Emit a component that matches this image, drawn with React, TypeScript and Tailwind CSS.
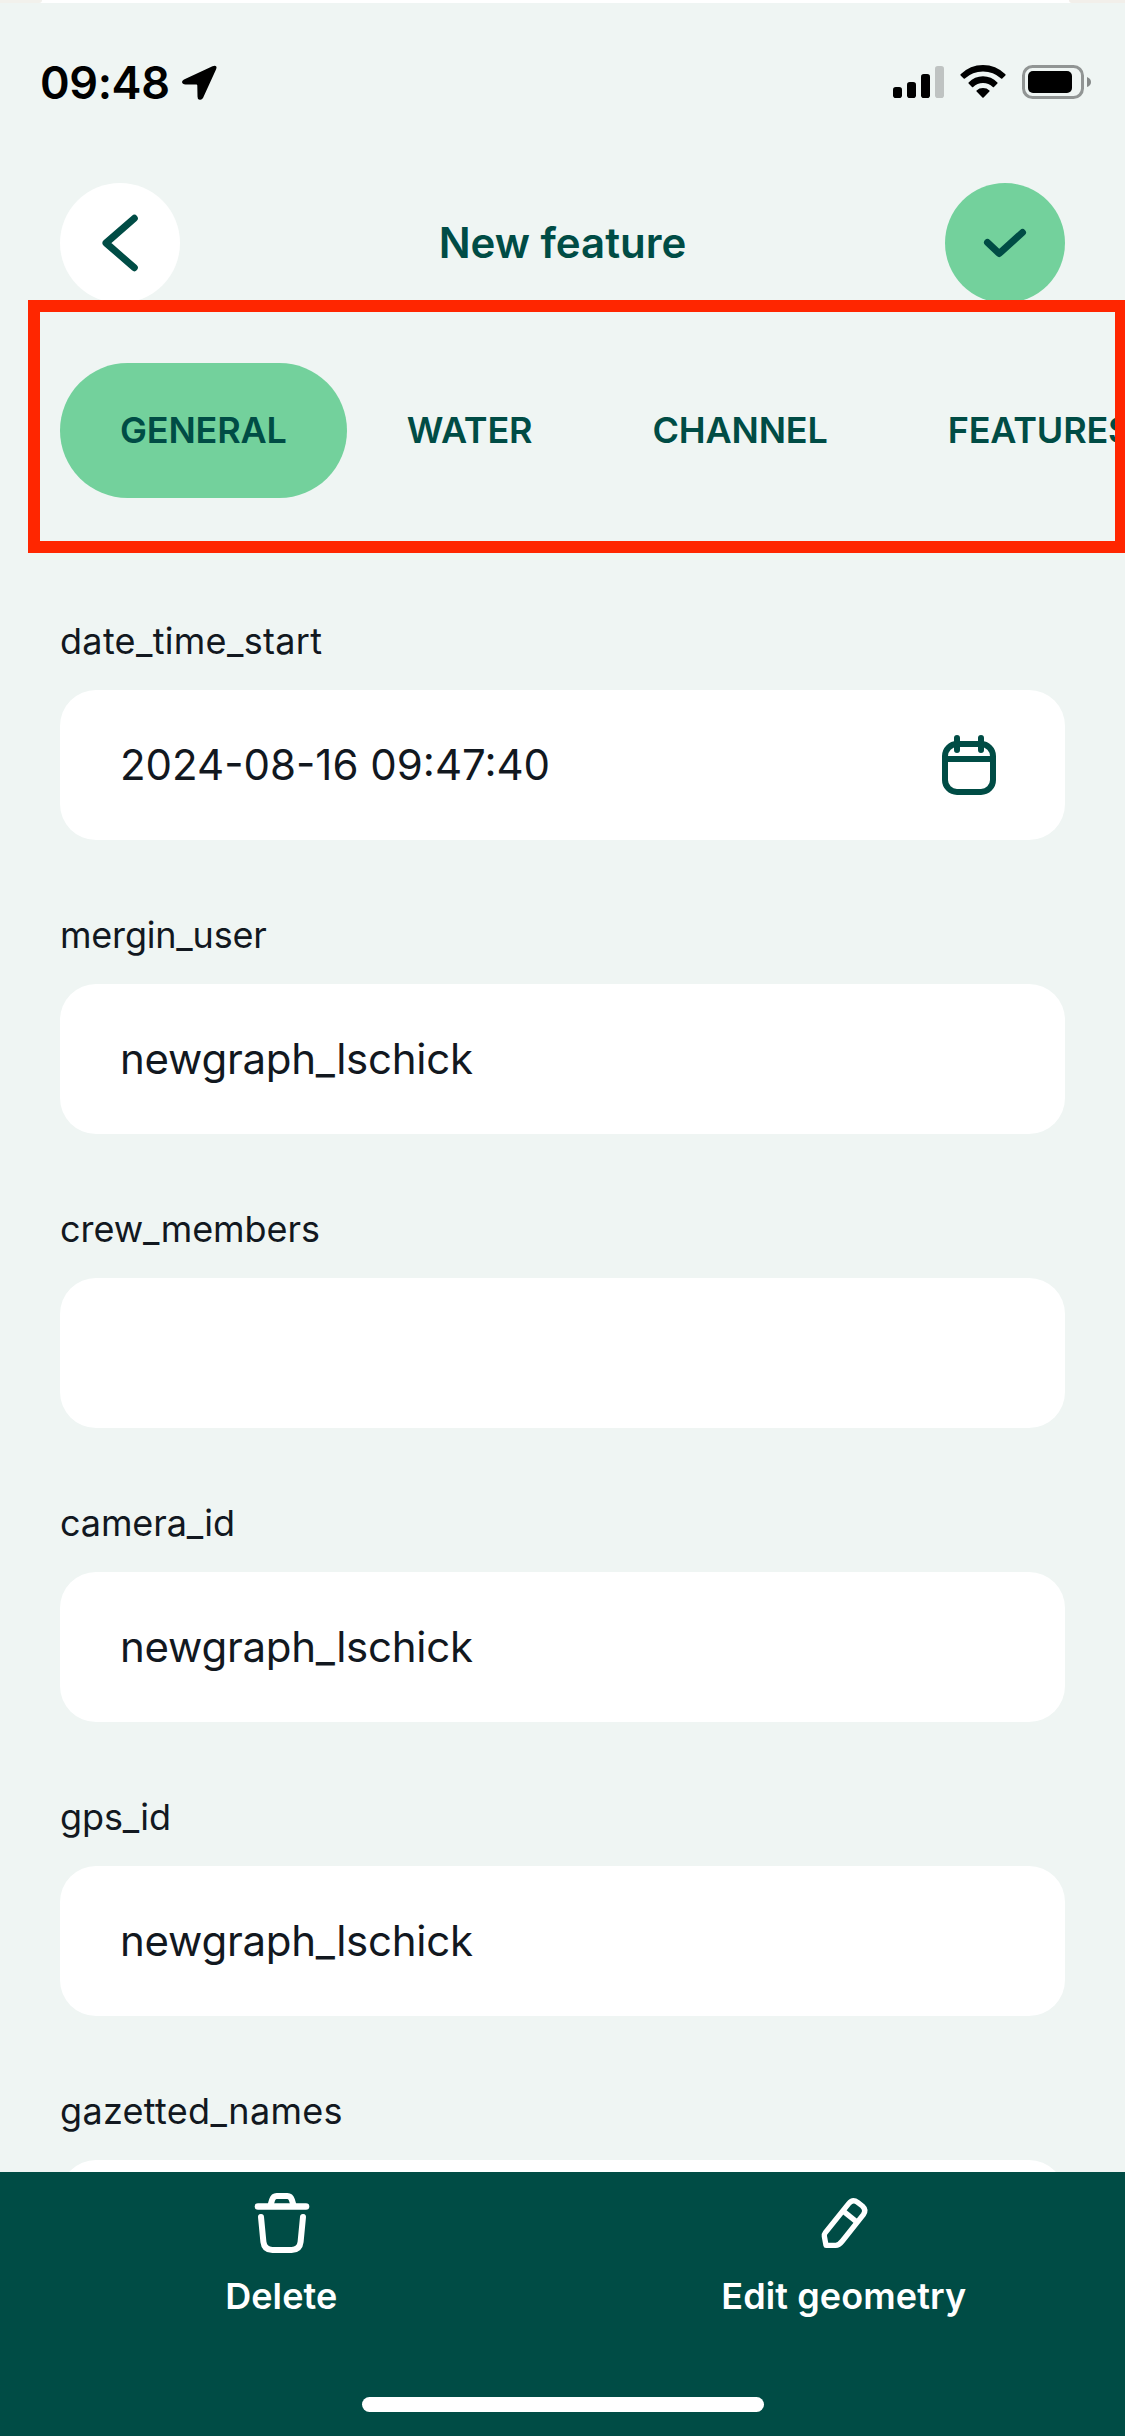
import type { ReactNode } from "react";

const tabs = ["GENERAL", "WATER", "CHANNEL", "FEATURES"];

const fields = [
  { label: "date_time_start", value: "2024-08-16 09:47:40", calendar: true, labelSpacing: "tracking-[0.31px]", valueSpacing: "" },
  { label: "mergin_user", value: "newgraph_lschick", labelSpacing: "tracking-[-0.2px]", valueSpacing: "tracking-[-0.25px]" },
  { label: "crew_members", value: "", labelSpacing: "tracking-[-0.05px]", valueSpacing: "" },
  { label: "camera_id", value: "newgraph_lschick", labelSpacing: "tracking-[-0.1px]", valueSpacing: "tracking-[-0.25px]" },
  { label: "gps_id", value: "newgraph_lschick", labelSpacing: "tracking-[-0.1px]", valueSpacing: "tracking-[-0.25px]" },
  { label: "gazetted_names", value: "", labelSpacing: "tracking-[0.3px]", valueSpacing: "" },
];

function CalendarIcon() {
  return (
    <svg className="size-[72px] text-[#004C45]" viewBox="0 0 24 24" fill="none" stroke="currentColor" strokeWidth="2" strokeLinecap="round">
      <rect x="4" y="5" width="16" height="16" rx="4" />
      <path d="M4 10h16M8 3v4M16 3v4" />
    </svg>
  );
}

function TrashIcon() {
  return (
    <svg className="ml-px size-[72px]" viewBox="0 0 24 24" fill="none" stroke="currentColor" strokeWidth="2" strokeLinecap="round" strokeLinejoin="round">
      <path d="M4 6.5h16" strokeWidth="2.2" />
      <path d="M8.1 6.3L8.7 4.3Q9.1 3 10.2 3h3.6q1.1 0 1.5 1.3l.6 2" />
      <path d="M5 10L5.8 18.3Q6.1 21 8.8 21H15.2Q17.9 21 18.2 18.3L19 10" />
    </svg>
  );
}

function PencilIcon() {
  return (
    <svg className="size-[72px]" viewBox="0 0 216 216" fill="none" stroke="currentColor" strokeWidth="16" strokeLinejoin="round">
      <path d="M54 175L49 148Q48 142 52 137L122 50Q134 35 149 46L163 57Q176 69 166 83L103 162Q93 175 83 175Z" />
      <path d="M104 71L144 103" />
    </svg>
  );
}

function StatusBar() {
  return (
    <div className="flex h-[158px] items-start justify-between pr-[34px] pl-[40px] text-black">
      <div className="flex pt-[50px]">
        <span className="w-[142px] text-[45px] leading-[60px] font-semibold tracking-[-0.4px]">09:48</span>
        <svg className="mt-[12px] h-[35px] w-[35px]" viewBox="0 0 35 35">
          <path d="M2 14.5L30.5 1.2Q36 -.5 34 4.5L21 33Q19.500 35.500 17 34.500Q15.500 34 15.500 31.500L15.300 20.500Q15.300 19.600 14.400 19.600L3.500 19.500Q.3 19.300 0 17Q0 15.500 2 14.500Z" />
        </svg>
      </div>
      <div className="flex items-start pt-[62px]">
        <svg className="h-[36px] w-[51px]" viewBox="0 0 51 36">
          <rect y="22" width="9" height="11" rx="2.800" />
          <rect x="14" y="17" width="9" height="16" rx="2.800" />
          <rect x="28" y="9" width="9" height="24" rx="2.800" />
          <rect x="42" y="1" width="9" height="32" rx="2.800" fill="#BFC3C2" />
        </svg>
        <svg className="ml-[16px] h-[34px] w-[46px]" viewBox="0 0 46 34">
          <path d="M.6 9.200Q10.200 0 23 0T45.400 9.200Q45.900 9.800 45.400 10.400L42.300 13.500Q41.700 14 41.100 13.500Q33.500 6.500 23 6.500T4.900 13.500Q4.300 14 3.700 13.500L.6 10.400Q.1 9.800 .6 9.200Z" />
          <path d="M8.600 17.400Q14.700 11.300 23 11.300T37.400 17.400Q37.900 18 37.400 18.600L34 22Q33.400 22.500 32.800 22Q28.800 18.100 23 18.100T13.200 22Q12.600 22.500 12 22L8.600 18.600Q8.100 18 8.600 17.400Z" />
          <path d="M16.600 25.400Q19.100 23 23 23T29.400 25.400Q30 26 29.400 26.600L23.600 32.400Q23 33 22.400 32.400L16.600 26.600Q16 26 16.600 25.400Z" />
        </svg>
        <svg className="ml-[16px] h-[34px] w-[69px]" viewBox="0 0 69 34">
          <rect x="1.500" y="1.500" width="59" height="31" rx="9" fill="none" stroke="#919594" strokeWidth="3" />
          <rect x="6" y="6" width="44" height="22" rx="5" />
          <path d="M65 12q4 1.500 4 5t-4 5z" fill="#868a89" />
        </svg>
      </div>
    </div>
  );
}

function Header() {
  return (
    <header className="mt-[22px] flex h-[120px] items-center justify-between px-[60px] text-[#004C45]">
      <button className="size-[120px] rounded-full bg-white">
        <svg viewBox="0 0 120 120" fill="none" stroke="currentColor" strokeWidth="7" strokeLinecap="round" strokeLinejoin="round">
          <path d="M74.300 35.300L46 60L74.300 84.700" />
        </svg>
      </button>
      <h1 className="pb-[2px] text-[42px] font-semibold">New feature</h1>
      <button className="size-[120px] rounded-full bg-[#73D19C]">
        <svg viewBox="0 0 120 120" fill="none" stroke="currentColor" strokeWidth="7" strokeLinecap="round" strokeLinejoin="round">
          <path d="M42.500 59.500L54.200 70.500L77.500 49.500" />
        </svg>
      </button>
    </header>
  );
}

function ToolButton({ icon, label }: { icon: ReactNode; label: string }) {
  return (
    <button className="flex flex-1 flex-col items-center gap-[15px] text-[36px] leading-[44px] font-semibold tracking-[0.1px]">
      {icon}
      {label}
    </button>
  );
}

export default function App() {
  return (
    <div className="relative flex h-[2436px] w-[1125px] flex-col overflow-hidden bg-[#EFF5F3] font-['Inter',sans-serif]">
      <div className="flex h-[3px] shrink-0 justify-between bg-white">
        <div className="h-full w-[42px] rounded-br-full bg-[#F2F1EC]" />
        <div className="h-full w-[56px] rounded-bl-full bg-[#F2EFEA]" />
      </div>
      <StatusBar />
      <Header />

      <nav className="mt-[60px] flex h-[135px] shrink-0 pl-[60px] text-[36px] font-semibold tracking-[-0.16px] text-[#004C45]">
        {tabs.map((tab, i) => (
          <button key={tab} className={i === 0 ? "shrink-0 rounded-full bg-[#73D19C] px-[60px] pb-[2px]" : "shrink-0 px-[60px] pb-[2px]"}>
            {tab}
          </button>
        ))}
      </nav>

      <main className="flex min-h-0 flex-1 flex-col gap-[68px] overflow-hidden px-[60px] pt-[116px] text-[#12181F]">
        {fields.map((field) => (
          <div key={field.label} className="flex shrink-0 flex-col gap-[22px]">
            <label className={`text-[36px] leading-[54px] ${field.labelSpacing}`}>{field.label}</label>
            <div className="flex h-[150px] items-center justify-between rounded-[36px] bg-white px-[60px] text-[42px]">
              <span className={`pb-[2px] ${field.valueSpacing}`}>{field.value}</span>
              {field.calendar && <CalendarIcon />}
            </div>
          </div>
        ))}
      </main>

      <footer className="flex h-[264px] shrink-0 flex-col items-center justify-between bg-[#004C45] pt-[15px] pb-[24px] text-white">
        <div className="flex w-full">
          <ToolButton icon={<TrashIcon />} label="Delete" />
          <ToolButton icon={<PencilIcon />} label="Edit geometry" />
        </div>
        <div className="h-[15px] w-[402px] rounded-full bg-white" />
      </footer>

      {/* Highlight frame around the tab strip */}
      <div className="pointer-events-none absolute top-[300px] right-[-2px] h-[253px] w-[1099px] border-[12px] border-[#FF2600]" />
    </div>
  );
}
